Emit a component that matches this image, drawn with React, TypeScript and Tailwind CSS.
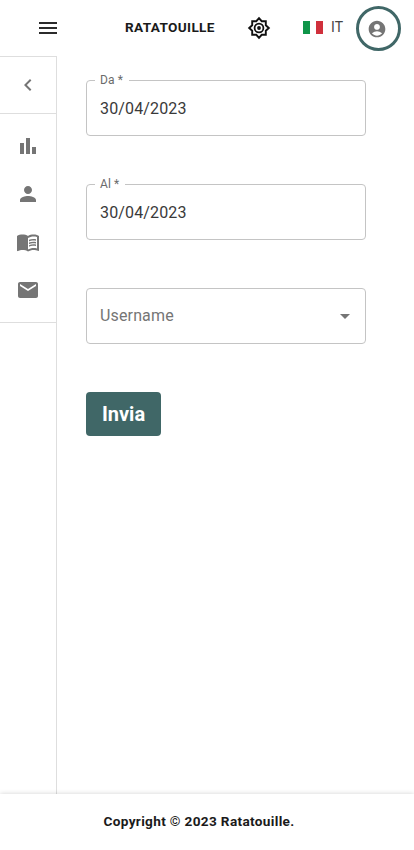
import type { ReactNode } from "react";
import {
  MdAccountCircle,
  MdArrowDropDown,
  MdBarChart,
  MdChevronLeft,
  MdEmail,
  MdMenu,
  MdMenuBook,
  MdPerson,
} from "react-icons/md";

function BrightnessIcon() {
  return (
    <svg viewBox="0 0 24 24" className="size-6" fill="none" stroke="currentColor" strokeWidth="1.9">
      <path d="M12 2.2 14.7 5.2H18.8v4.1L21.8 12l-3 2.7v4.1h-4.1L12 21.8l-2.7-3H5.2v-4.1L2.2 12l3-2.7V5.2h4.1z" />
      <circle cx="12" cy="12" r="4.4" strokeWidth="1.8" />
      <circle cx="12" cy="12" r="1.9" fill="currentColor" stroke="none" />
    </svg>
  );
}

function DateField({ label, value }: { label: string; value: string }) {
  return (
    <fieldset className="h-[61px] w-[280px] rounded border border-[#c4c4c4] pl-2">
      <legend className="h-[11px] pl-[5px] pr-1.5 text-xs leading-[11px] tracking-[0.11px] text-[#6b6b6b]">{label}</legend>
      <div className="pl-[5px] pt-[11px] text-base leading-6 tracking-[0.15px] text-[#3a3a3a]">{value}</div>
    </fieldset>
  );
}

function NavItem({ children }: { children: ReactNode }) {
  return <button className="flex h-12 w-14 items-center justify-center">{children}</button>;
}

export default function App() {
  return (
    <div className="flex h-[850px] w-[414px] flex-col overflow-hidden bg-white font-['Roboto',sans-serif] text-[#1a1a1a]">
      <header className="flex h-14 shrink-0 items-center">
        <button className="ml-9 text-[#2b2b2b]"><MdMenu size={24} /></button>
        <h1 className="ml-[65px] w-[91px] whitespace-nowrap pb-0.5 text-[13.6px] font-bold leading-5 tracking-[0.35px]">RATATOUILLE</h1>
        <button className="ml-[31px] text-[#111]"><BrightnessIcon /></button>
        <button className="ml-8 flex items-center pb-0.5">
          <span className="flex h-[13px] w-5">
            <i className="w-[7px] bg-[#0f9549]" />
            <i className="w-1.5 bg-white" />
            <i className="w-[7px] bg-[#d0303c]" />
          </span>
          <span className="ml-[7px] w-3.5 text-sm leading-5 text-[#444]">IT</span>
        </button>
        <button className="ml-3 flex size-[45px] items-center justify-center rounded-full border-[3px] border-[#406767] pr-[3px] pt-0.5 text-[#757575]">
          <MdAccountCircle size={20} />
        </button>
      </header>
      <div className="flex min-h-0 flex-1">
        <aside className="w-[57px] shrink-0 border-r border-t border-[#dedede]">
          <button className="flex h-14 w-full items-center justify-center text-[#757575]"><MdChevronLeft size={24} /></button>
          <nav className="border-y border-[#dedede] py-2 text-[#757575]">
            <NavItem><MdBarChart size={24} /></NavItem>
            <NavItem><MdPerson size={24} /></NavItem>
            <NavItem><MdMenuBook size={24} /></NavItem>
            <NavItem><MdEmail size={24} /></NavItem>
          </nav>
        </aside>
        <main className="flex flex-col items-start pl-[29px] pt-[19px]">
          <DateField label="Da *" value="30/04/2023" />
          <div className="mt-[43px]"><DateField label="Al *" value="30/04/2023" /></div>
          <button className="mt-12 flex h-14 w-[280px] items-center justify-between rounded border border-[#c4c4c4] pl-[13px] pr-2 text-base tracking-[0.15px] text-[#757575]">
            Username
            <MdArrowDropDown size={24} />
          </button>
          <button className="mt-12 h-11 w-[75px] rounded bg-[#406767] text-xl font-bold text-white">Invia</button>
        </main>
      </div>
      <footer className="relative flex h-14 shrink-0 items-center bg-white pb-0.5 pl-[103.5px] text-[13.6px] font-bold tracking-[0.34px] shadow-[0_0_5px_rgba(0,0,0,0.18)]">
        Copyright © 2023 Ratatouille.
      </footer>
    </div>
  );
}
